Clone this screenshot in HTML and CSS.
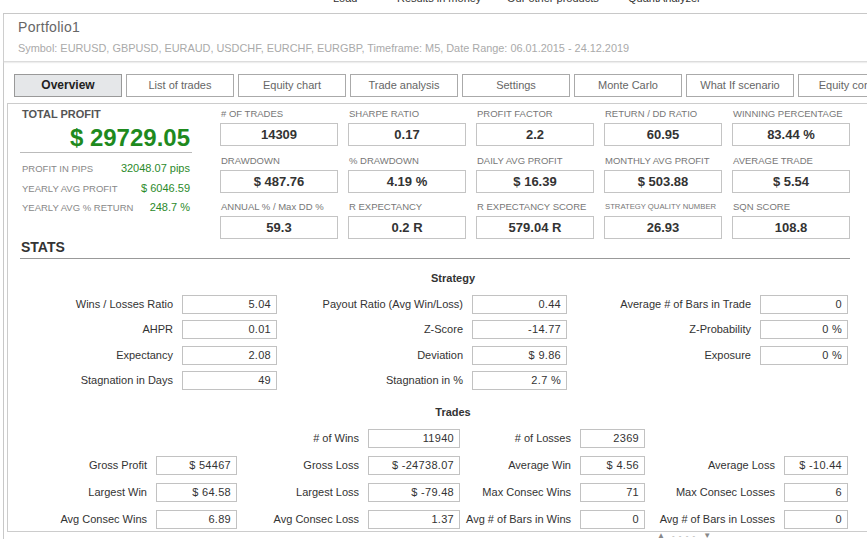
FILE: index.html
```html
<!DOCTYPE html>
<html lang="en">
    <head>
        <meta charset="UTF-8">
        <meta name="viewport" content="width=device-width, initial-scale=1.0">
        <title>Portfolio1</title>
        <link rel="stylesheet" href="styles.css">
    </head>
    <body>
        <div class="topnav">
            <div class="topnav-inner">
                <span class="nav-load">Load</span>
                <span class="nav-money">Results in money</span>
                <span class="nav-products">Our other products</span>
                <span>QuantAnalyzer</span>
            </div>
        </div>
        <div class="portfolio">
            <div class="portfolio-head">
                <h1>Portfolio1</h1>
                <p class="symbols">Symbol: EURUSD, GBPUSD, EURAUD, USDCHF, EURCHF, EURGBP, Timeframe: M5, Date Range: 06.01.2015 - 24.12.2019</p>
            </div>
            <div class="tabs">
                <div class="tab active">Overview</div>
                <div class="tab">List of trades</div>
                <div class="tab">Equity chart</div>
                <div class="tab">Trade analysis</div>
                <div class="tab">Settings</div>
                <div class="tab">Monte Carlo</div>
                <div class="tab">What If scenario</div>
                <div class="tab">Equity control</div>
            </div>
            <div class="content">
                <div class="summary">
                    <div class="profit">
                        <div class="profit-title">TOTAL PROFIT</div>
                        <div class="profit-total">$ 29729.05</div>
                        <div class="profit-rows">
                            <div class="profit-row"><span>PROFIT IN PIPS</span><b>32048.07 pips</b></div>
                            <div class="profit-row"><span>YEARLY AVG PROFIT</span><b>$ 6046.59</b></div>
                            <div class="profit-row"><span>YEARLY AVG % RETURN</span><b>248.7 %</b></div>
                        </div>
                    </div>
                    <div class="metrics">
                        <div class="metric"><p># OF TRADES</p><div class="metric-box">14309</div></div>
                        <div class="metric"><p>SHARPE RATIO</p><div class="metric-box">0.17</div></div>
                        <div class="metric"><p>PROFIT FACTOR</p><div class="metric-box">2.2</div></div>
                        <div class="metric"><p>RETURN / DD RATIO</p><div class="metric-box">60.95</div></div>
                        <div class="metric"><p>WINNING PERCENTAGE</p><div class="metric-box">83.44 %</div></div>

                        <div class="metric"><p>DRAWDOWN</p><div class="metric-box">$ 487.76</div></div>
                        <div class="metric"><p>% DRAWDOWN</p><div class="metric-box">4.19 %</div></div>
                        <div class="metric"><p>DAILY AVG PROFIT</p><div class="metric-box">$ 16.39</div></div>
                        <div class="metric"><p>MONTHLY AVG PROFIT</p><div class="metric-box">$ 503.88</div></div>
                        <div class="metric"><p>AVERAGE TRADE</p><div class="metric-box">$ 5.54</div></div>

                        <div class="metric"><p>ANNUAL % / Max DD %</p><div class="metric-box">59.3</div></div>
                        <div class="metric"><p>R EXPECTANCY</p><div class="metric-box">0.2 R</div></div>
                        <div class="metric"><p>R EXPECTANCY SCORE</p><div class="metric-box">579.04 R</div></div>
                        <div class="metric"><p class="small">STRATEGY QUALITY NUMBER</p><div class="metric-box">26.93</div></div>
                        <div class="metric"><p>SQN SCORE</p><div class="metric-box">108.8</div></div>
                    </div>
                </div>

                <h2 class="stats-title">STATS</h2>

                <div class="stats-block">
                    <h3>Strategy</h3>
                    <div class="grid strategy">
                        <label>Wins / Losses Ratio</label><div class="val">5.04</div>
                        <label>Payout Ratio (Avg Win/Loss)</label><div class="val">0.44</div>
                        <label>Average # of Bars in Trade</label><div class="val">0</div>

                        <label>AHPR</label><div class="val">0.01</div>
                        <label>Z-Score</label><div class="val">-14.77</div>
                        <label>Z-Probability</label><div class="val">0 %</div>

                        <label>Expectancy</label><div class="val">2.08</div>
                        <label>Deviation</label><div class="val">$ 9.86</div>
                        <label>Exposure</label><div class="val">0 %</div>

                        <label>Stagnation in Days</label><div class="val">49</div>
                        <label>Stagnation in %</label><div class="val">2.7 %</div>
                    </div>

                    <h3 class="trades-title">Trades</h3>
                    <div class="grid trades">
                        <span></span><span></span>
                        <label># of Wins</label><div class="val">11940</div>
                        <label># of Losses</label><div class="val">2369</div>
                        <span></span><span></span>

                        <label>Gross Profit</label><div class="val">$ 54467</div>
                        <label>Gross Loss</label><div class="val">$ -24738.07</div>
                        <label>Average Win</label><div class="val">$ 4.56</div>
                        <label>Average Loss</label><div class="val">$ -10.44</div>

                        <label>Largest Win</label><div class="val">$ 64.58</div>
                        <label>Largest Loss</label><div class="val">$ -79.48</div>
                        <label>Max Consec Wins</label><div class="val">71</div>
                        <label>Max Consec Losses</label><div class="val">6</div>

                        <label>Avg Consec Wins</label><div class="val">6.89</div>
                        <label>Avg Consec Loss</label><div class="val">1.37</div>
                        <label>Avg # of Bars in Wins</label><div class="val">0</div>
                        <label>Avg # of Bars in Losses</label><div class="val">0</div>
                    </div>
                </div>
            </div>
            <div class="pager"><span>&#9650;</span><span class="dots">- - - -</span><span>&#9660;</span></div>
        </div>
    </body>
</html>
```

FILE: styles.css
```css
body {
    margin: 0;
    width: 867px;
    height: 539px;
    overflow: hidden;
    background: #fff;
    font-family: "Liberation Sans", Arial, sans-serif;
    color: #333;
}

/* top menu, scrolled mostly out of view */
.topnav {
    height: 13px;
    overflow: hidden;
}

.topnav-inner {
    margin-top: -8px;
    padding-left: 333px;
    display: flex;
    font-size: 11px;
    line-height: 13px;
    color: #333;
    white-space: nowrap;
}

.nav-load {
    width: 64px;
}

.nav-money {
    width: 110px;
}

.nav-products {
    width: 121px;
}

.portfolio {
    margin-left: 3px;
    width: 1000px;
    border: 1px solid #c8c8c8;
    border-right: none;
}

.portfolio-head {
    padding: 5px 14px 6px;
    border-bottom: 1px solid #dcdcdc;
    box-shadow: 0 1px 1px #eee;
}

h1 {
    margin: 0;
    font-size: 14px;
    line-height: 16px;
    font-weight: normal;
    color: #666;
    letter-spacing: 0.3px;
}

.symbols {
    margin: 6px 0 0;
    font-size: 10.9px;
    line-height: 14px;
    color: #aaa;
}

.tabs {
    display: flex;
    padding: 12px 0 6px 10px;
}

.tab {
    flex: none;
    width: 108px;
    height: 23px;
    box-sizing: border-box;
    margin-right: 4px;
    border: 1px solid #aaa;
    text-align: center;
    font-size: 11px;
    line-height: 21px;
    color: #666;
    white-space: nowrap;
    overflow: hidden;
}

.tab.active {
    background-color: #e5e7e9;
    border-color: #999;
    color: #222;
    font-weight: bold;
    font-size: 12px;
}

.content {
    margin-left: 3px;
    padding: 0 0 2.5px 12px;
    border-top: 1px solid #ccc;
    border-left: 1px solid #ccc;
    border-bottom: 1px solid #ccc;
}

/* summary: total profit + metric boxes */
.summary {
    display: flex;
    padding-top: 3px;
}

.profit {
    width: 172px;
}

.profit-title {
    font-size: 11px;
    line-height: 14px;
    font-weight: bold;
    color: #555;
    padding-left: 2px;
}

.profit-total {
    margin-top: 3px;
    padding-right: 2px;
    font-size: 24px;
    line-height: 28px;
    font-weight: bold;
    color: #1e8a1e;
    text-align: right;
    border-bottom: 1px solid #bbb;
}

.profit-rows {
    margin-top: 6px;
}

.profit-row {
    display: flex;
    justify-content: space-between;
    line-height: 19.5px;
    padding: 0 2px;
}

.profit-row span {
    font-size: 9.5px;
    color: #888;
}

.profit-row b {
    font-weight: normal;
    font-size: 11px;
    color: #2b8a2b;
}

.metrics {
    margin-left: 28px;
    display: grid;
    grid-template-columns: repeat(5, 118px);
    column-gap: 10px;
    row-gap: 7.5px;
}

.metric p {
    margin: 0 0 2px;
    padding-left: 1px;
    height: 14px;
    font-size: 9.5px;
    line-height: 14px;
    color: #777;
    white-space: nowrap;
}

.metric p.small {
    font-size: 7.7px;
}

.metric-box {
    height: 23px;
    box-sizing: border-box;
    border: 1px solid #c4c4c4;
    text-align: center;
    font-size: 13px;
    line-height: 21px;
    font-weight: bold;
    color: #333;
}

/* stats tables */
.stats-title {
    margin: 0;
    width: 830px;
    padding-bottom: 3px;
    border-bottom: 1px solid #999;
    font-size: 14px;
    line-height: 16px;
    color: #333;
    padding-left: 1px;
    box-sizing: border-box;
}

.stats-block {
    width: 866px;
}

.stats-block h3 {
    margin: 12px 0 9.5px;
    text-align: center;
    font-size: 11px;
    line-height: 14px;
    color: #333;
}

.stats-block h3.trades-title {
    margin-top: 15px;
}

.grid {
    display: grid;
    grid-auto-rows: 19px;
}

.strategy {
    grid-template-columns: 162px 95px 195px 95px 193px 88px;
    row-gap: 6.5px;
}

.trades {
    grid-template-columns: 136px 81px 131px 92px 120px 65px 139px 64px;
    row-gap: 8px;
}

.grid label {
    text-align: right;
    padding-right: 9px;
    font-size: 11px;
    line-height: 19px;
    color: #333;
    white-space: nowrap;
}

.val {
    box-sizing: border-box;
    border: 1px solid #c2c2c2;
    text-align: right;
    padding-right: 5px;
    font-size: 11px;
    line-height: 17px;
    color: #333;
    letter-spacing: 0.3px;
}

.pager {
    display: flex;
    padding-left: 653px;
    font-size: 8px;
    line-height: 7px;
    color: #888;
}

.pager .dots {
    margin: 0 7px;
    letter-spacing: 1px;
    color: #aaa;
}
```
